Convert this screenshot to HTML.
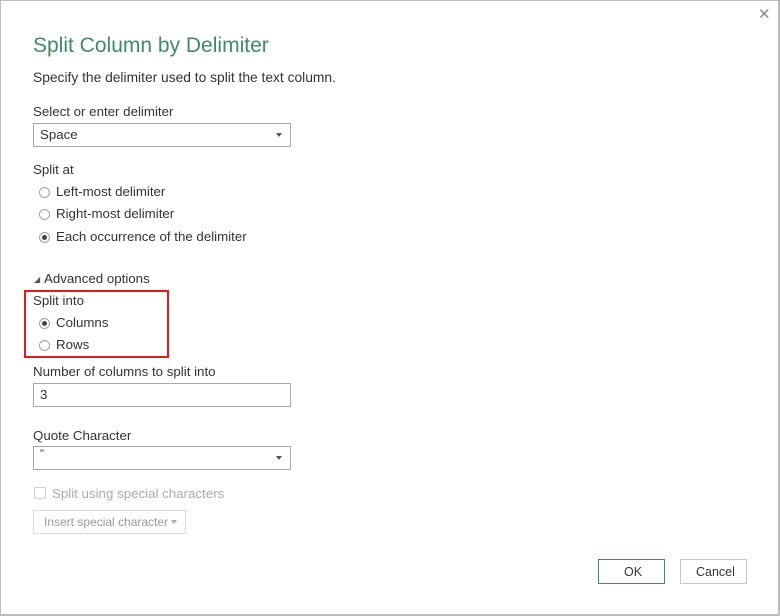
<!DOCTYPE html>
<html><head><style>
*{margin:0;padding:0;box-sizing:border-box}
body{width:780px;height:616px;background:#fff;font-family:"Liberation Sans",sans-serif;color:#333;position:relative;overflow:hidden}
.frame{position:absolute;left:0;top:0;width:780px;height:616px;border:1px solid #bdbdbd;border-right:2px solid #bdbdbd;border-bottom:2px solid #bdbdbd}
.a{position:absolute;white-space:nowrap;font-size:13.3px}
.box{position:absolute;border:1px solid #a8a8a8;background:#fff}
.rad{position:absolute;width:11px;height:11px;border:1px solid #a0a0a0;border-radius:50%;background:#fff}
.rad.on::after{content:"";position:absolute;left:2px;top:2px;width:5px;height:5px;border-radius:50%;background:#444}
.arrow{position:absolute;width:0;height:0;border-left:3.5px solid transparent;border-right:3.5px solid transparent;border-top:4px solid #555}
</style></head><body>
<div class="frame"></div>
<div class="a" style="left:758px;top:5px;font-size:15px;color:#888">✕</div>
<div class="a" style="left:33px;top:34px;font-size:21px;color:#3f8a6a">Split Column by Delimiter</div>
<div class="a" style="left:33px;top:70px;font-size:13.8px">Specify the delimiter used to split the text column.</div>
<div class="a" style="left:33px;top:104px">Select or enter delimiter</div>
<div class="box" style="left:33px;top:123px;width:258px;height:24px"></div>
<div class="a" style="left:40px;top:127px">Space</div>
<div class="arrow" style="left:276px;top:133px"></div>
<div class="a" style="left:33px;top:162px">Split at</div>
<div class="rad" style="left:39px;top:187px"></div><div class="a" style="left:56px;top:184px">Left-most delimiter</div>
<div class="rad" style="left:39px;top:209px"></div><div class="a" style="left:56px;top:206px">Right-most delimiter</div>
<div class="rad on" style="left:39px;top:232px"></div><div class="a" style="left:56px;top:229px">Each occurrence of the delimiter</div>
<div class="a" style="left:34px;top:275px;font-size:8px;color:#555">◢</div>
<div class="a" style="left:44px;top:271px">Advanced options</div>
<div style="position:absolute;left:24px;top:290px;width:145px;height:68px;border:2px solid #e21b1b"></div>
<div class="a" style="left:33px;top:293px">Split into</div>
<div class="rad on" style="left:39px;top:318px"></div><div class="a" style="left:56px;top:315px">Columns</div>
<div class="rad" style="left:39px;top:340px"></div><div class="a" style="left:56px;top:337px">Rows</div>
<div class="a" style="left:33px;top:364px">Number of columns to split into</div>
<div class="box" style="left:33px;top:383px;width:258px;height:24px"></div>
<div class="a" style="left:40px;top:387px">3</div>
<div class="a" style="left:33px;top:428px">Quote Character</div>
<div class="box" style="left:33px;top:446px;width:258px;height:24px"></div>
<div class="a" style="left:40px;top:448px;font-size:11px">"</div>
<div class="arrow" style="left:276px;top:456px"></div>
<div style="position:absolute;left:34px;top:487px;width:12px;height:12px;border:1px solid #d0d0d0"></div>
<div class="a" style="left:52px;top:486px;color:#aaa">Split using special characters</div>
<div class="box" style="left:33px;top:510px;width:153px;height:24px;border-color:#d8d8d8"></div>
<div class="a" style="left:44px;top:515px;font-size:12px;color:#999">Insert special character</div>
<div class="arrow" style="left:171px;top:520px;border-top-color:#aaa"></div>
<div style="position:absolute;left:598px;top:559px;width:67px;height:25px;border:1px solid #3f8a6a"></div>
<div class="a" style="left:624px;top:565px;font-size:12.5px;color:#333">OK</div>
<div style="position:absolute;left:680px;top:559px;width:67px;height:25px;border:1px solid #c8c8c8"></div>
<div class="a" style="left:696px;top:565px;font-size:12.5px">Cancel</div>
</body></html>
